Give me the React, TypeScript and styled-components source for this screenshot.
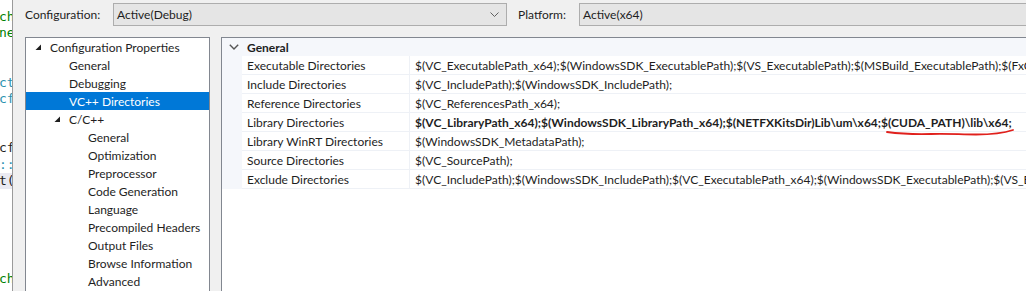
import styled, { createGlobalStyle } from 'styled-components';
import { FunctionComponent } from 'react';

const GlobalStyle = createGlobalStyle`
    html, body {
        margin: 0;
        padding: 0;
        overflow: hidden;
        background: #f0f0f0;
    }
    * {
        box-sizing: border-box;
    }
`;

const Page = styled.div`
    display: flex;
    width: 1026px;
    height: 291px;
    overflow: hidden;
    font-family: Lato, 'Liberation Sans', sans-serif;
    font-size: 12px;
    color: #1e1e1e;
`;

/* editor peeking out behind the dialog */
const CodeStrip = styled.div`
    width: 13px;
    flex: none;
    background: #ffffff;
    border-right: 1px solid #9a9a9a;
    padding-top: 9px;
    overflow: hidden;
    font-family: 'DejaVu Sans Mono', 'Liberation Mono', monospace;
    font-size: 13px;
`;
const CodeLine = styled.div<{ $color: string; $hl?: boolean }>`
    height: 16.4px;
    line-height: 16.4px;
    white-space: nowrap;
    text-indent: -1px;
    color: ${(p) => p.$color};
    background: ${(p) => (p.$hl ? '#eaeaf2' : 'transparent')};
`;

const Dialog = styled.div`
    flex: 1;
    min-width: 0;
    padding: 3px 0 0 12px;
    display: flex;
    flex-direction: column;
`;

const TopBar = styled.div`
    display: flex;
    align-items: center;
    height: 23px;
    white-space: nowrap;
`;
const FieldLabel = styled.span<{ $width: number }>`
    width: ${(p) => p.$width}px;
    flex: none;
`;
const Combo = styled.div<{ $width?: number }>`
    position: relative;
    height: 23px;
    flex: ${(p) => (p.$width ? 'none' : '1')};
    width: ${(p) => (p.$width ? `${p.$width}px` : 'auto')};
    margin-right: ${(p) => (p.$width ? '11px' : '-20px')};
    background: #e5e5e5;
    border: 1px solid #adadad;
    display: flex;
    align-items: center;
    padding-left: 3px;
`;
const ComboArrow = styled.svg`
    position: absolute;
    right: 7px;
    top: 8px;
`;

const Body = styled.div`
    display: flex;
    gap: 11px;
    margin-top: 11px;
    flex: 1;
    min-height: 0;
`;

const Tree = styled.div`
    width: 185px;
    flex: none;
    background: #ffffff;
    border: 1px solid #828790;
    border-bottom: none;
`;
const TreeRow = styled.div<{ $level: number; $selected?: boolean }>`
    display: flex;
    align-items: center;
    height: 18px;
    padding-left: ${(p) => 9 + p.$level * 19}px;
    white-space: nowrap;
    background: ${(p) => (p.$selected ? '#0078d7' : 'transparent')};
    color: ${(p) => (p.$selected ? '#ffffff' : '#1e1e1e')};
`;
const Expander = styled.span`
    width: 15px;
    flex: none;
    display: flex;
    align-items: center;
`;

const Grid = styled.div`
    flex: 1;
    margin-right: -20px;
    background: #ffffff;
    border: 1px solid #828790;
    border-bottom: none;
`;
const CategoryRow = styled.div`
    display: flex;
    align-items: center;
    height: 18px;
    background: #f5f7fb;
    font-weight: 700;
`;
const Chevron = styled.span`
    width: 25px;
    flex: none;
    display: flex;
    justify-content: center;
    padding-right: 2px;
`;
const PropRow = styled.div`
    display: flex;
    height: 19px;
    background: linear-gradient(to right, #f5f7fb 20px, #ffffff 20px);
`;
const PropName = styled.div`
    width: 168px;
    flex: none;
    margin-left: 20px;
    padding-left: 5px;
    border-bottom: 1px solid #eef1f6;
    border-right: 1px solid #eef1f6;
    display: flex;
    align-items: center;
    white-space: nowrap;
`;
const PropValue = styled.div<{ $bold?: boolean }>`
    position: relative;
    flex: 1;
    min-width: 0;
    padding-left: 5px;
    border-bottom: 1px solid #eef1f6;
    display: flex;
    align-items: center;
    white-space: nowrap;
    font-weight: ${(p) => (p.$bold ? 700 : 400)};
`;
/* hand-drawn red annotation under the CUDA path */
const Scribble = styled.svg`
    position: absolute;
    left: 476px;
    top: 15px;
    overflow: visible;
    z-index: 1;
`;

const TriangleIcon: FunctionComponent<{ color?: string }> = ({ color = '#1e1e1e' }) => (
    <svg width="7" height="7" viewBox="0 0 7 7">
        <polygon points="6,0.5 6,6 0.5,6" fill={color} />
    </svg>
);

const code: { text: string; color: string; hl?: boolean }[] = [
    { text: 'ch', color: '#008000' },
    { text: 'ne', color: '#008000' },
    { text: '', color: '#000' },
    { text: '', color: '#000' },
    { text: 'ct', color: '#2b91af' },
    { text: 'cf', color: '#2b91af' },
    { text: '', color: '#000' },
    { text: '', color: '#000' },
    { text: 'cf', color: '#1e1e1e' },
    { text: '::', color: '#2b91af' },
    { text: 't(', color: '#1e1e1e', hl: true },
    { text: '', color: '#000' },
    { text: '', color: '#000' },
    { text: '', color: '#000' },
    { text: '', color: '#000' },
    { text: '', color: '#000' },
    { text: 'ch', color: '#008000' },
];

const treeItems: { label: string; level: number; expander?: boolean; selected?: boolean }[] = [
    { label: 'Configuration Properties', level: 0, expander: true },
    { label: 'General', level: 1 },
    { label: 'Debugging', level: 1 },
    { label: 'VC++ Directories', level: 1, selected: true },
    { label: 'C/C++', level: 1, expander: true },
    { label: 'General', level: 2 },
    { label: 'Optimization', level: 2 },
    { label: 'Preprocessor', level: 2 },
    { label: 'Code Generation', level: 2 },
    { label: 'Language', level: 2 },
    { label: 'Precompiled Headers', level: 2 },
    { label: 'Output Files', level: 2 },
    { label: 'Browse Information', level: 2 },
    { label: 'Advanced', level: 2 },
];

const props: { name: string; value: string; bold?: boolean; marked?: boolean }[] = [
    {
        name: 'Executable Directories',
        value: '$(VC_ExecutablePath_x64);$(WindowsSDK_ExecutablePath);$(VS_ExecutablePath);$(MSBuild_ExecutablePath);$(FxCopDir);$(PATH);',
    },
    { name: 'Include Directories', value: '$(VC_IncludePath);$(WindowsSDK_IncludePath);' },
    { name: 'Reference Directories', value: '$(VC_ReferencesPath_x64);' },
    {
        name: 'Library Directories',
        value: '$(VC_LibraryPath_x64);$(WindowsSDK_LibraryPath_x64);$(NETFXKitsDir)Lib\\um\\x64;$(CUDA_PATH)\\lib\\x64;',
        bold: true,
        marked: true,
    },
    { name: 'Library WinRT Directories', value: '$(WindowsSDK_MetadataPath);' },
    { name: 'Source Directories', value: '$(VC_SourcePath);' },
    {
        name: 'Exclude Directories',
        value: '$(VC_IncludePath);$(WindowsSDK_IncludePath);$(VC_ExecutablePath_x64);$(WindowsSDK_ExecutablePath);$(VS_ExecutablePath);$(MSBuild_ExecutablePath);',
    },
];

export default function App() {
    return (
        <Page>
            <GlobalStyle />
            <CodeStrip>
                {code.map((line, i) => (
                    <CodeLine key={i} $color={line.color} $hl={line.hl}>
                        {line.text}
                    </CodeLine>
                ))}
            </CodeStrip>
            <Dialog>
                <TopBar>
                    <FieldLabel $width={88}>Configuration:</FieldLabel>
                    <Combo $width={394}>
                        Active(Debug)
                        <ComboArrow width="9" height="6" viewBox="0 0 9 6">
                            <polyline points="0.5,0.5 4.5,4.5 8.5,0.5" fill="none" stroke="#606060" strokeWidth="1" />
                        </ComboArrow>
                    </Combo>
                    <FieldLabel $width={61}>Platform:</FieldLabel>
                    <Combo>Active(x64)</Combo>
                </TopBar>
                <Body>
                    <Tree>
                        {treeItems.map((item, i) => (
                            <TreeRow key={i} $level={item.level} $selected={item.selected}>
                                <Expander>{item.expander && <TriangleIcon />}</Expander>
                                {item.label}
                            </TreeRow>
                        ))}
                    </Tree>
                    <Grid>
                        <CategoryRow>
                            <Chevron>
                                <svg width="10" height="6" viewBox="0 0 10 6">
                                    <polyline points="0.8,0.8 5,5 9.2,0.8" fill="none" stroke="#555" strokeWidth="1.4" />
                                </svg>
                            </Chevron>
                            General
                        </CategoryRow>
                        {props.map((p) => (
                            <PropRow key={p.name}>
                                <PropName>{p.name}</PropName>
                                <PropValue $bold={p.bold}>
                                    {p.value}
                                    {p.marked && (
                                        <Scribble width="130" height="8" viewBox="0 0 130 8">
                                            <path
                                                d="M1 4 C 12 5.5, 25 6.5, 45 6 C 62 5.5, 75 6.5, 90 6.5 C 105 6.5, 118 5, 127 2"
                                                fill="none"
                                                stroke="#e0201c"
                                                strokeWidth="1.8"
                                                strokeLinecap="round"
                                            />
                                        </Scribble>
                                    )}
                                </PropValue>
                            </PropRow>
                        ))}
                    </Grid>
                </Body>
            </Dialog>
        </Page>
    );
}
